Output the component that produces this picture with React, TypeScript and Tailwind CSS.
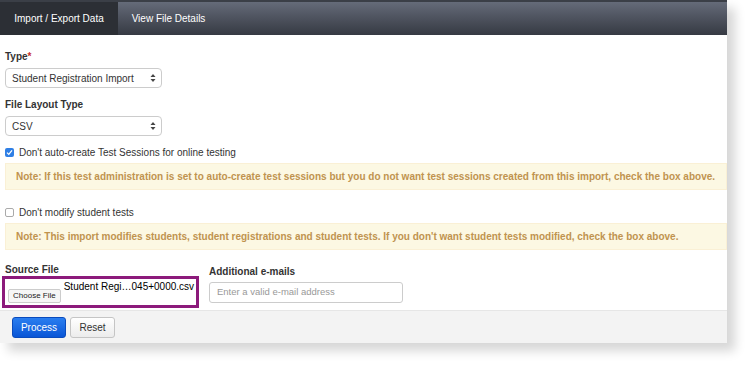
import React from "react";

function SelectArrows() {
  return (
    <svg width="6" height="10" viewBox="0 0 6 10" className="shrink-0">
      <path d="M0.5 4 L3 1 L5.5 4 Z" fill="#444" />
      <path d="M0.5 6 L3 9 L5.5 6 Z" fill="#444" />
    </svg>
  );
}

export default function App() {
  return (
    <div className="w-[750px] h-[366px] bg-white overflow-hidden" style={{ fontFamily: '"Liberation Sans", Arial, sans-serif' }}>
      <div className="w-[727px] h-[343px] bg-white flex flex-col shadow-[8px_8px_10px_rgba(0,0,0,0.16)]">
        <div className="h-[2px] bg-[#3b3f47]" />
        <div className="h-[33px] flex bg-gradient-to-b from-[#656b79] to-[#363a43] text-[10px] text-white">
          <div className="w-[118px] flex items-center justify-center bg-[#2c2f35]">Import / Export Data</div>
          <div className="w-[101px] flex items-center justify-center">View File Details</div>
        </div>
        <div className="flex-1 flex flex-col px-[5px] pt-[15px] text-[10px] text-[#333]">
          <div className="font-bold h-[14px] leading-[14px]">
            Type<span className="text-[#c9302c]">*</span>
          </div>
          <div className="mt-[4px] w-[157px] h-[20px] border border-[#ccc] rounded-[4px] flex items-center justify-between pl-[6px] pr-[5px] text-[10px]">
            <span className="whitespace-nowrap">Student Registration Import</span>
            <SelectArrows />
          </div>
          <div className="mt-[10px] font-bold h-[14px] leading-[14px]">File Layout Type</div>
          <div className="mt-[4px] w-[157px] h-[20px] border border-[#ccc] rounded-[4px] flex items-center justify-between pl-[6px] pr-[5px] text-[10px]">
            <span>CSV</span>
            <SelectArrows />
          </div>
          <div className="mt-[9px] flex items-center gap-[5px] h-[14px]">
            <div className="w-[9px] h-[9px] rounded-[2px] bg-[#2f7fe5] flex items-center justify-center">
              <svg width="7" height="7" viewBox="0 0 7 7"><path d="M1 3.6 L2.8 5.4 L6 1.4" stroke="white" strokeWidth="1.3" fill="none" /></svg>
            </div>
            <span>Don't auto-create Test Sessions for online testing</span>
          </div>
          <div className="mt-[4px] -mr-[5px] h-[27px] bg-[#fcf8e3] border border-[#faf0d5] flex items-center pl-[10px] font-bold text-[#c0934f] text-[10px] whitespace-nowrap">
            Note: If this test administration is set to auto-create test sessions but you do not want test sessions created from this import, check the box above.
          </div>
          <div className="mt-[15px] flex items-center gap-[5px] h-[14px]">
            <div className="w-[9px] h-[9px] rounded-[2px] border border-[#aaa] bg-white" />
            <span>Don't modify student tests</span>
          </div>
          <div className="mt-[4px] -mr-[5px] h-[27px] bg-[#fcf8e3] border border-[#faf0d5] flex items-center pl-[10px] font-bold text-[#c0934f] text-[10px] whitespace-nowrap">
            Note: This import modifies students, student registrations and student tests. If you don't want student tests modified, check the box above.
          </div>
          <div className="mt-[14px] flex gap-[10px]">
            <div className="flex flex-col">
              <div className="font-bold h-[12px] leading-[12px]">Source File</div>
              <div className="-ml-[3px] w-[197px] h-[32px] border-[3px] border-[#8c1a7b] flex items-start pt-[1px] pl-[3px] gap-[3px] whitespace-nowrap">
                <div className="mt-[9px] h-[14px] px-[4px] border border-[#ccc] rounded-[2px] bg-[#f6f6f6] text-[8px] flex items-center text-[#222]">Choose File</div>
                <span className="text-[10px] leading-[13px] text-black">Student Regi…045+0000.csv</span>
              </div>
            </div>
            <div className="flex flex-col">
              <div className="font-bold h-[14px] leading-[14px] mt-[1px]">Additional e-mails</div>
              <div className="mt-[3px] w-[194px] h-[21px] border border-[#ccc] rounded-[3px] flex items-center px-[7px] text-[#999] text-[9.5px]">
                Enter a valid e-mail address
              </div>
            </div>
          </div>
        </div>
        <div className="h-[33px] bg-[#f3f3f3] border-t border-[#e6e6e6] flex items-center gap-[4px] px-[12px]">
          <div className="w-[54px] h-[21px] rounded-[3px] bg-gradient-to-b from-[#2a7ef0] to-[#0955d6] border border-[#0a4bbd] text-white text-[10px] flex items-center justify-center">Process</div>
          <div className="w-[45px] h-[21px] rounded-[3px] bg-gradient-to-b from-white to-[#ececec] border border-[#c5c5c5] text-[#333] text-[10px] flex items-center justify-center">Reset</div>
        </div>
      </div>
    </div>
  );
}
